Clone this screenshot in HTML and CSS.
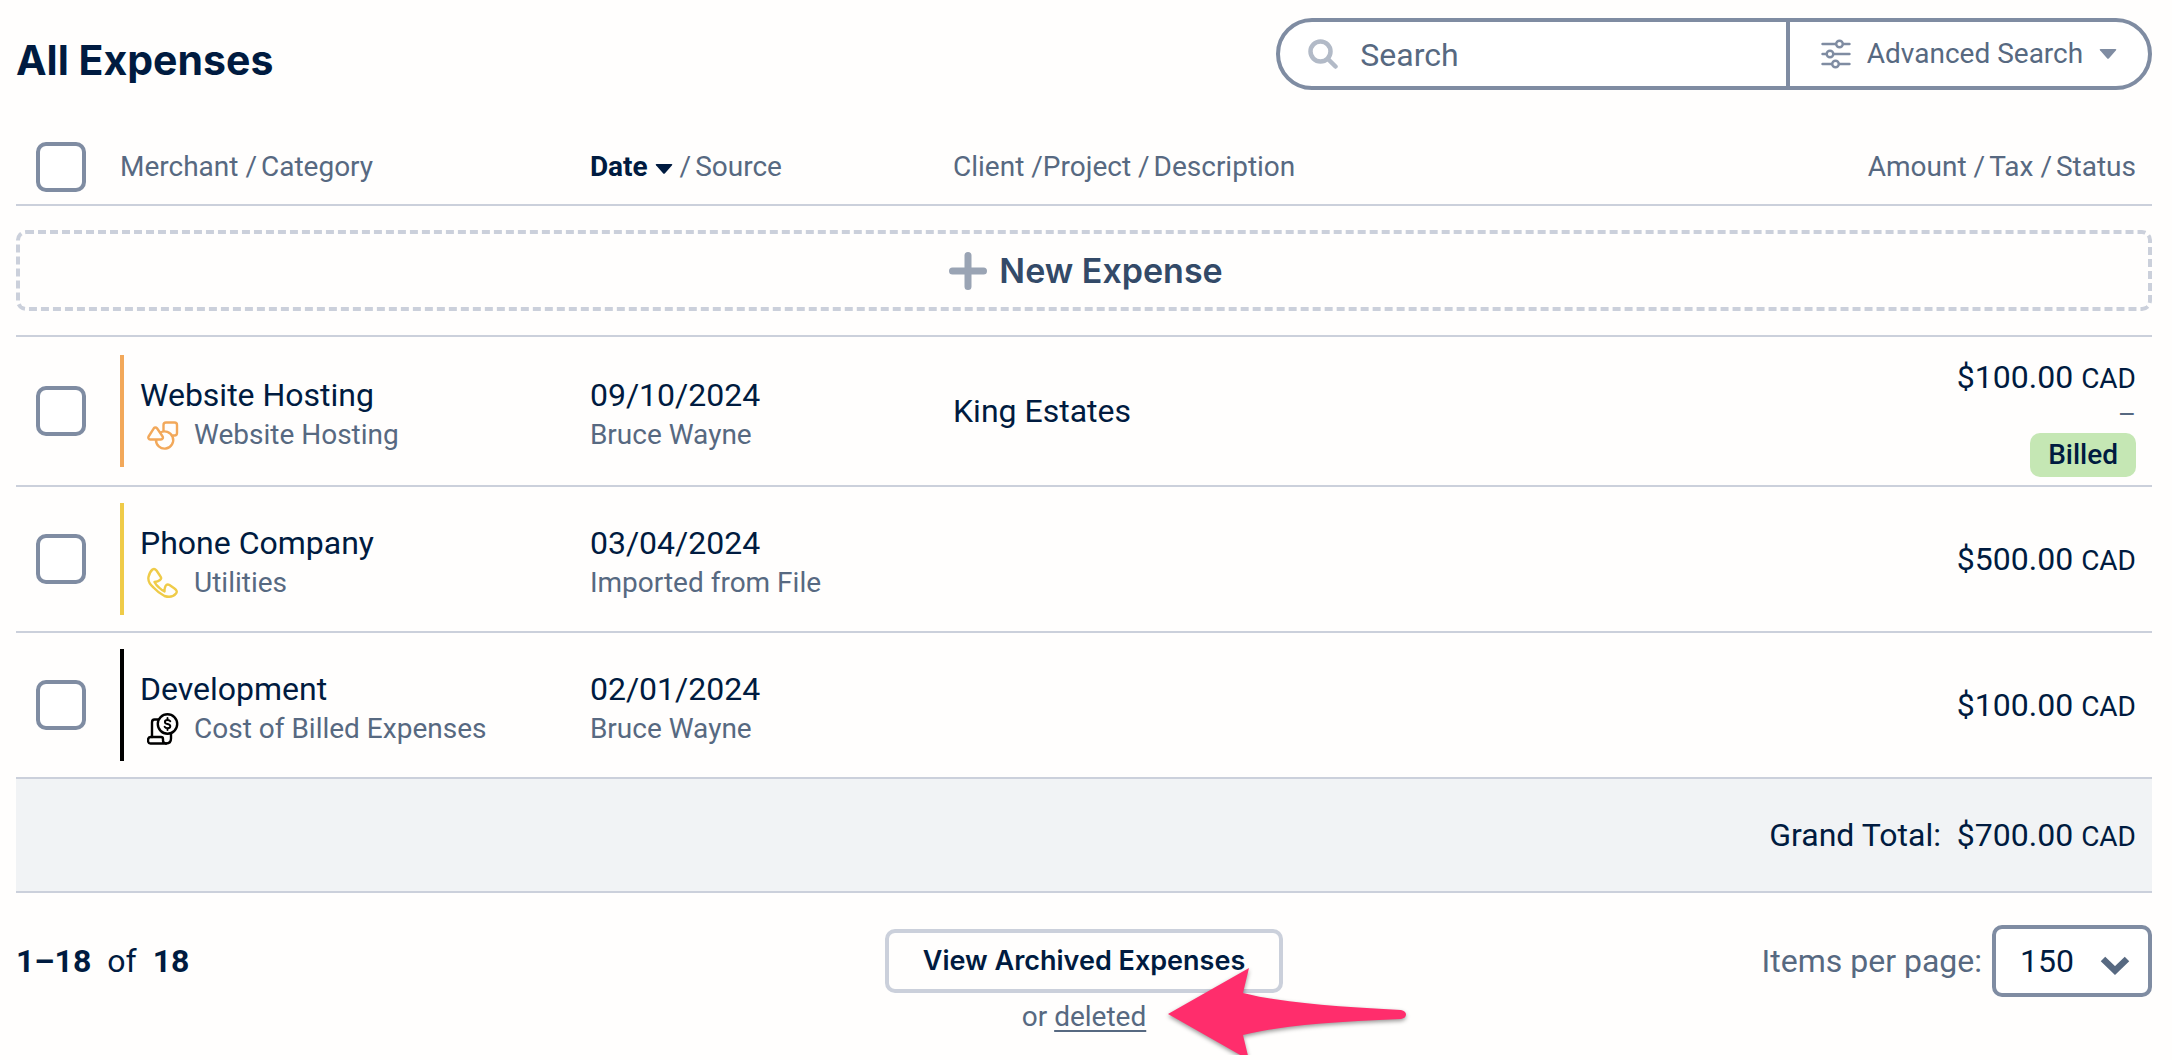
FILE: index.html
```html
<!DOCTYPE html>
<html lang="en">
<head>
    <meta charset="UTF-8">
    <meta name="viewport" content="width=device-width, initial-scale=1.0">
    <title>All Expenses</title>
    <link rel="stylesheet" href="styles.css">
</head>
<body>
    <header class="page-header">
        <h1>All Expenses</h1>
        <form class="search" role="search">
            <label class="search-box">
                <svg class="search-icon" viewBox="0 0 30 30" aria-hidden="true">
                    <circle cx="12.5" cy="12.5" r="10" fill="none" stroke="currentColor" stroke-width="4.5"/>
                    <path d="M20 20l7.5 7.5" stroke="currentColor" stroke-width="4.5" stroke-linecap="round"/>
                </svg>
                <input type="search" placeholder="Search" aria-label="Search">
            </label>
            <button type="button" class="advanced">
                <svg class="sliders-icon" viewBox="0 0 30 30" fill="none" stroke="currentColor" stroke-width="2.4" stroke-linecap="round" aria-hidden="true">
                    <path d="M1.5 5h13.5M22 5h6.5M1.5 15h4M12.5 15h16M1.5 25h9.5M18 25h10.5"/>
                    <circle cx="18.5" cy="5" r="3.3"/>
                    <circle cx="9" cy="15" r="3.3"/>
                    <circle cx="14.5" cy="25" r="3.3"/>
                </svg>
                Advanced Search
                <svg class="caret" viewBox="0 0 18 10" aria-hidden="true"><path d="M1.5 0h15q1.5 0 .5 1.3L10 9.3q-1 1-2 0L1 1.3Q0 0 1.5 0z" fill="currentColor"/></svg>
            </button>
        </form>
    </header>

    <table class="expenses">
        <thead>
            <tr>
                <th class="col-check"><input type="checkbox" aria-label="Select all expenses"></th>
                <th class="col-merchant"><button type="button">Merchant</button> /<button type="button">Category</button></th>
                <th class="col-date"><button type="button" class="sorted">Date <svg class="caret" viewBox="0 0 18 10" aria-hidden="true"><path d="M1.5 0h15q1.5 0 .5 1.3L10 9.3q-1 1-2 0L1 1.3Q0 0 1.5 0z" fill="currentColor"/></svg></button> /<button type="button">Source</button></th>
                <th class="col-client"><button type="button">Client</button> /<button type="button" class="project">Project</button> /<button type="button">Description</button></th>
                <th class="col-amount"><button type="button">Amount</button> /<button type="button">Tax</button> /<button type="button">Status</button></th>
            </tr>
        </thead>
        <tbody>
            <tr>
                <td class="new-row" colspan="5">
                    <button type="button" class="new-expense">
                        <svg class="plus-icon" viewBox="0 0 38 38" aria-hidden="true"><path d="M19 3.5v31M3.5 19h31" stroke="currentColor" stroke-width="7" stroke-linecap="round"/></svg>
                        New Expense
                    </button>
                </td>
            </tr>
            <tr>
                <td class="col-check"><input type="checkbox" aria-label="Select Website Hosting"></td>
                <td>
                    <div class="entry merchant hosting">
                        <div class="main">Website Hosting</div>
                        <div class="sub">
                            <svg class="category-icon" viewBox="0 0 32 32" fill="none" stroke="currentColor" stroke-width="2.4" stroke-linejoin="round" aria-hidden="true">
                                <path d="M16.5 12.5V6a2.5 2.5 0 0 1 2.5-2.5h8.5A2.5 2.5 0 0 1 30 6v8a2.5 2.5 0 0 1-2.5 2.5h-2"/>
                                <path d="M6.8 9.3a2 2 0 0 1 3.2 0l5.5 8a2 2 0 0 1-1.6 3.2H3.2a2 2 0 0 1-1.6-3z"/>
                                <path d="M13 13.7a8.6 8.6 0 1 1-4 6.8"/>
                            </svg>
                            Website Hosting
                        </div>
                    </div>
                </td>
                <td>
                    <div class="entry">
                        <div class="main">09/10/2024</div>
                        <div class="sub">Bruce Wayne</div>
                    </div>
                </td>
                <td class="main">King Estates</td>
                <td class="col-amount amount-stack">
                    <div class="main">$100.00 <small>CAD</small></div>
                    <div class="sub tax">–</div>
                    <span class="badge">Billed</span>
                </td>
            </tr>
            <tr>
                <td class="col-check"><input type="checkbox" aria-label="Select Phone Company"></td>
                <td>
                    <div class="entry merchant utilities">
                        <div class="main">Phone Company</div>
                        <div class="sub">
                            <svg class="category-icon" viewBox="0 0 32 32" fill="none" stroke="currentColor" stroke-width="2.4" stroke-linejoin="round" stroke-linecap="round" aria-hidden="true">
                                <path d="M5.5 2.5q2-1.5 4 1l4 6q1.5 2-.5 3.5-2 1.800-5.5 2 1.5 3 4.5 5.5 2.500 2.500 5.500 4 0-3.500 1-5.500 1.500-2.500 4-1l5 3.500q3.500 2.500 1.500 5-4 5-11.500 2.500-6-3-11-8.500Q.5 15.500 1.500 10q1-5 4-7.500z"/>
                            </svg>
                            Utilities
                        </div>
                    </div>
                </td>
                <td>
                    <div class="entry">
                        <div class="main">03/04/2024</div>
                        <div class="sub">Imported from File</div>
                    </div>
                </td>
                <td></td>
                <td class="col-amount main">$500.00 <small>CAD</small></td>
            </tr>
            <tr>
                <td class="col-check"><input type="checkbox" aria-label="Select Development"></td>
                <td>
                    <div class="entry merchant billed-costs">
                        <div class="main">Development</div>
                        <div class="sub">
                            <svg class="category-icon" viewBox="0 0 32 32" fill="none" stroke="currentColor" stroke-width="2.4" stroke-linejoin="round" stroke-linecap="round" aria-hidden="true">
                                <circle cx="20.5" cy="11" r="9.7"/>
                                <path d="M11 6.5H7.5q-2.5 0-2.5 3V24"/>
                                <path d="M3.5 24H14q2 0 2 2v1.5q0 3 3 3H3.5q-2.5 0-2.5-3.2T3.5 24z"/>
                                <path d="M19 30.5q5 0 5-5V20.5"/>
                                <path d="M23.3 8.3q-.8-1.3-2.8-1.3-2.6 0-2.6 1.9 0 1.5 2.6 2.1 2.8.6 2.8 2.2 0 1.9-2.8 1.9-2 0-2.9-1.4M20.5 5v1.5M20.5 15.5V17" stroke-width="1.9"/>
                            </svg>
                            Cost of Billed Expenses
                        </div>
                    </div>
                </td>
                <td>
                    <div class="entry">
                        <div class="main">02/01/2024</div>
                        <div class="sub">Bruce Wayne</div>
                    </div>
                </td>
                <td></td>
                <td class="col-amount main">$100.00 <small>CAD</small></td>
            </tr>
        </tbody>
        <tfoot>
            <tr>
                <td class="total main" colspan="5">
                    <span class="total-label">Grand Total:</span>
                    <span>$700.00 <small>CAD</small></span>
                </td>
            </tr>
        </tfoot>
    </table>

    <footer class="page-footer">
        <div class="range"><b>1–18</b><span>of</span><b>18</b></div>
        <div class="archive">
            <button type="button" class="archive-button">View Archived Expenses</button>
            <p class="deleted">
                or <a href="#">deleted</a>
                <svg class="pointer" viewBox="0 0 244 90" aria-hidden="true">
                    <path d="M1 44L82 -2L76 23Q122 35 234 40Q239 41 239 44.5T234 49Q122 53 76 65L82 90z" fill="#ff2d6c"/>
                </svg>
            </p>
        </div>
        <div class="per-page">
            <label for="perPage">Items per page:</label>
            <div class="select">
                <select id="perPage">
                    <option>30</option>
                    <option>50</option>
                    <option>100</option>
                    <option selected>150</option>
                </select>
                <svg class="chevron" viewBox="0 0 30 20" aria-hidden="true"><path d="M3 4l12 11.5L27 4" fill="none" stroke="currentColor" stroke-width="6.5"/></svg>
            </div>
        </div>
    </footer>
</body>
</html>
```

FILE: styles.css
```css
* {
    box-sizing: border-box;
}
body {
    margin: 0;
    padding: 18px 20px 20px 16px;
    background-color: #fffefd;
    color: #001b40;
    font-family: Roboto, sans-serif;
    font-size: 32px;
    line-height: 40px;
}
button, input, select {
    font: inherit;
    color: inherit;
}
button {
    cursor: pointer;
}

/* header */
.page-header {
    display: flex;
    justify-content: space-between;
    align-items: flex-end;
    margin-bottom: 40px;
}
h1 {
    margin: 0;
    font-family: Inter, sans-serif;
    font-size: 41px;
    font-weight: 700;
    line-height: 60px;
}
.search {
    display: flex;
    width: 41%;
    height: 72px;
    border: 4px solid #7f8ca2;
    border-radius: 36px;
    background-color: #fff;
    color: #576981;
    overflow: hidden;
}
.search-box {
    flex: 1;
    display: flex;
    align-items: center;
    gap: 22px;
    padding-left: 28px;
}
.search-box input {
    flex: 1;
    min-width: 0;
    padding: 2px 0 0;
    border: none;
    outline: none;
    background: none;
}
.search-box input::placeholder {
    color: #576981;
    opacity: 1;
}
.search-icon {
    width: 30px;
    height: 30px;
    color: #b2bac7;
}
.advanced {
    display: flex;
    align-items: center;
    justify-content: center;
    gap: 16px;
    width: 362px;
    border: none;
    border-left: 4px solid #7f8ca2;
    background: none;
    font-size: 28px;
}
.advanced svg {
    color: #7f8ca2;
}
.sliders-icon {
    width: 30px;
    height: 30px;
}
.caret {
    width: 18px;
    height: 10px;
}

/* expenses table */
.expenses {
    width: 100%;
    table-layout: fixed;
    border-collapse: separate;
    border-spacing: 0;
}
th, td {
    padding: 0;
    border-bottom: 2px solid #cbd0db;
    text-align: left;
    vertical-align: middle;
}
th {
    height: 76px;
    color: #576981;
    font-size: 28px;
    font-weight: 400;
}
th button {
    padding: 0;
    border: none;
    background: none;
}
th button + button {
    margin-left: 4px;
}
th .project {
    margin-left: 0;
}
th .sorted {
    color: #001b40;
    font-weight: 700;
}
th .caret {
    vertical-align: middle;
}
.col-check {
    width: 104px;
    padding-left: 20px;
}
.col-merchant {
    width: 22%;
}
.col-date {
    width: 17%;
}
.col-amount {
    padding-right: 16px;
    text-align: right;
}
input[type="checkbox"] {
    display: block;
    appearance: none;
    width: 50px;
    height: 50px;
    margin: 0;
    border: 4px solid #7f8ca2;
    border-radius: 10px;
    background-color: #fff;
}
input[type="checkbox"]:checked {
    background-color: #7f8ca2;
}
.new-row {
    padding: 24px 0;
}
.new-expense {
    display: flex;
    align-items: center;
    justify-content: center;
    gap: 12px;
    width: 100%;
    height: 81px;
    padding: 0 0 0 4px;
    border: 4px dashed #cbd0db;
    border-radius: 10px;
    background: none;
    color: #334a68;
    font-family: Inter, sans-serif;
    font-size: 34px;
    font-weight: 600;
}
.plus-icon {
    width: 38px;
    height: 38px;
    color: #9aa4b4;
}
.entry {
    display: flex;
    flex-direction: column;
    gap: 2px;
    height: 112px;
    margin: 16px 0;
    padding-top: 20px;
}
.merchant {
    padding-left: 16px;
    border-left: 4px solid;
}
.hosting {
    border-color: #f2a85a;
}
.utilities {
    border-color: #efcb48;
}
.billed-costs {
    border-color: #000;
}
.hosting svg {
    color: #f2a85a;
}
.utilities svg {
    color: #efcb48;
}
.billed-costs svg {
    color: #000;
}
.sub {
    display: flex;
    align-items: center;
    color: #576981;
    font-size: 28px;
    line-height: 36px;
}
.category-icon {
    width: 32px;
    height: 32px;
    margin: 0 15px 0 7px;
}
small {
    font-size: 28px;
    line-height: 1;
}
.amount-stack {
    padding-top: 20px;
    padding-bottom: 8px;
}
.tax {
    justify-content: flex-end;
}
.badge {
    display: block;
    width: fit-content;
    margin-left: auto;
    padding: 0 18px;
    border-radius: 10px;
    background-color: #c5e7b4;
    font-size: 28px;
    font-weight: 500;
    line-height: 44px;
}
.total {
    height: 114px;
    padding-right: 16px;
    background-color: #f1f3f5;
    text-align: right;
}
.total-label {
    margin-right: 8px;
}

/* footer */
.page-footer {
    display: grid;
    grid-template-columns: 1fr auto 1fr;
    align-items: start;
    padding-top: 32px;
}
.range {
    display: flex;
    gap: 16px;
    line-height: 72px;
}
.archive {
    padding-top: 4px;
    text-align: center;
}
.archive-button {
    height: 64px;
    padding: 0 34px;
    border: 4px solid #cbd0db;
    border-radius: 10px;
    background: none;
    font-family: Inter, sans-serif;
    font-size: 27px;
    font-weight: 600;
}
.deleted {
    position: relative;
    width: fit-content;
    margin: 6px auto 0;
    color: #576981;
    font-size: 28px;
    line-height: 36px;
}
.deleted a {
    color: inherit;
    text-decoration-thickness: 2px;
    text-underline-offset: 4px;
}
/* arrow pointing at the deleted link, drawn over the button */
.pointer {
    position: absolute;
    top: -29px;
    left: calc(100% + 21px);
    width: 244px;
    height: 90px;
    overflow: visible;
    filter: drop-shadow(0 2px 2px rgba(0, 0, 0, 0.4));
    pointer-events: none;
}
.per-page {
    display: flex;
    align-items: center;
    justify-content: flex-end;
    gap: 10px;
    color: #576981;
}
.select {
    position: relative;
}
.select select {
    appearance: none;
    width: 160px;
    height: 72px;
    padding: 0 24px;
    border: 4px solid #7f8ca2;
    border-radius: 10px;
    background-color: #fff;
    color: #001b40;
}
.chevron {
    position: absolute;
    top: 30px;
    right: 22px;
    width: 30px;
    height: 20px;
    color: #576981;
    pointer-events: none;
}
```
